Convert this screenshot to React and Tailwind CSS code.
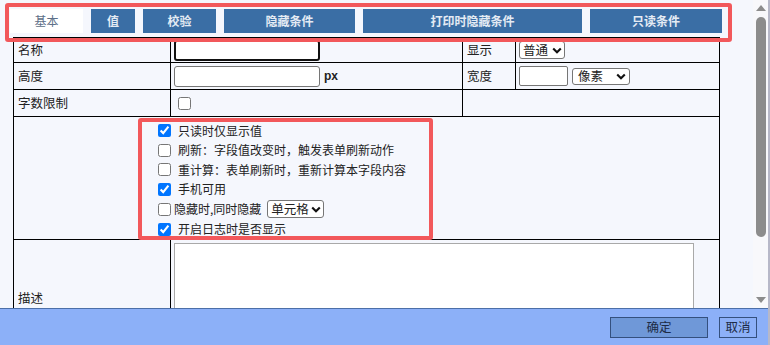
import { useState } from 'react';

const tabs = [
  { label: '基本', w: 'w-[73px]' },
  { label: '值', w: 'w-[44px]' },
  { label: '校验', w: 'w-[73px]' },
  { label: '隐藏条件', w: 'w-[131px]' },
  { label: '打印时隐藏条件', w: 'w-[219px]' },
  { label: '只读条件', w: 'w-[132px]' },
];

const options = [
  { label: '只读时仅显示值', checked: true },
  { label: '刷新：字段值改变时，触发表单刷新动作' },
  { label: '重计算：表单刷新时，重新计算本字段内容' },
  { label: '手机可用', checked: true },
];

function Check({ checked }) {
  return (
    <input
      type="checkbox"
      defaultChecked={checked}
      className="m-0 h-[13px] w-[13px] shrink-0"
    />
  );
}

// fake native select box: text + bold chevron
function Select({ value, className }) {
  return (
    <div
      className={
        'flex shrink-0 items-center justify-between rounded-[3px] border border-[#767676] bg-white pl-[3px] pr-[2px] text-[12.5px] leading-none text-[#222] ' +
        className
      }
    >
      <span>{value}</span>
      <svg width="10" height="7" viewBox="0 0 10 7">
        <path d="M1.2 1.4 L5 5.2 L8.8 1.4" fill="none" stroke="#111" strokeWidth="2.1" />
      </svg>
    </div>
  );
}

export default function App() {
  const [tab, setTab] = useState('基本');

  return (
    <div className="relative flex h-[345px] w-[770px] overflow-hidden bg-[#f5f7fd] font-['Noto_Sans_CJK_SC','Liberation_Sans',sans-serif] text-[12px] text-[#222] [text-spacing-trim:space-all]">
      <div className="flex w-[768px] flex-col">
        {/* scrollable body */}
        <div className="flex h-[308px]">
          <div className="flex-1 overflow-hidden pl-[10px] pt-[9px]">
            {/* tabs */}
            <div className="flex gap-2">
              {tabs.map((t) => (
                <button
                  key={t.label}
                  onClick={() => setTab(t.label)}
                  className={
                    'flex h-[24px] items-center justify-center text-[12px] ' +
                    t.w +
                    (tab === t.label
                      ? ' bg-white text-[#5d6f88]'
                      : ' bg-[#3a6ea5] font-bold text-[#e4ebf4]')
                  }
                >
                  {t.label}
                </button>
              ))}
            </div>

            {/* form table */}
            <table className="ml-[3px] mt-[4px] w-[706px] table-fixed border-collapse text-[12.5px]">
              <colgroup>
                <col className="w-[157px]" />
                <col className="w-[292px]" />
                <col className="w-[53px]" />
                <col className="w-[204px]" />
              </colgroup>
              <tbody>
                <tr className="h-[25px]">
                  <td className="border border-black pl-[4px]">名称</td>
                  <td className="border border-black pl-[3px]">
                    <input className="block h-[21px] w-[146px] rounded-[3px] border-2 border-[#111] bg-white outline-none" />
                  </td>
                  <td className="border border-black pl-[4px]">显示</td>
                  <td className="border border-black pl-[3px]">
                    <Select value="普通" className="h-[18px] w-[46px]" />
                  </td>
                </tr>
                <tr className="h-[27px]">
                  <td className="border border-black pl-[4px]">高度</td>
                  <td className="border border-black pl-[3px]">
                    <div className="flex items-center gap-[4px]">
                      <input className="h-[21px] w-[146px] rounded-[3px] border border-[#767676] bg-white outline-none" />
                      <span className="font-['Liberation_Sans',sans-serif] text-[12px] font-bold">px</span>
                    </div>
                  </td>
                  <td className="border border-black pl-[4px]">宽度</td>
                  <td className="border border-black pl-[3px]">
                    <div className="flex items-center gap-[4px]">
                      <input className="h-[20px] w-[49px] rounded-[2px] border border-[#767676] bg-white outline-none" />
                      <Select value="像素" className="h-[17px] w-[58px] pl-[5px] pr-[3px]" />
                    </div>
                  </td>
                </tr>
                <tr className="h-[27px]">
                  <td className="border border-black pl-[4px]">字数限制</td>
                  <td className="border border-black pl-[7px]">
                    <div className="flex">
                      <Check />
                    </div>
                  </td>
                  <td colSpan={2} className="border border-black" />
                </tr>
                <tr className="h-[123px]">
                  <td colSpan={4} className="border border-black pl-[144px] align-top text-[12px]">
                    <div className="flex flex-col pt-[4px]">
                      {options.map((o) => (
                        <label key={o.label} className="flex h-[19.5px] items-center gap-[7px]">
                          <Check checked={o.checked} />
                          <span>{o.label}</span>
                        </label>
                      ))}
                      <div className="flex h-[20px] items-center gap-[3px]">
                        <Check />
                        <span>隐藏时,同时隐藏</span>
                        <Select value="单元格" className="ml-[3px] h-[18px] w-[57px]" />
                      </div>
                      <label className="flex h-[20px] items-center gap-[7px]">
                        <Check checked />
                        <span>开启日志时是否显示</span>
                      </label>
                    </div>
                  </td>
                </tr>
                <tr className="h-[117px]">
                  <td className="border border-black pl-[4px]">描述</td>
                  <td colSpan={3} className="border border-black pl-[3px] pr-[25px] pt-[3px] align-top">
                    <textarea className="block h-[110px] w-full resize-none border border-[#a9a9a9] bg-white outline-none" />
                  </td>
                </tr>
              </tbody>
            </table>
          </div>

          {/* scrollbar */}
          <div className="flex w-[15px] flex-col items-center bg-[#f8f8fb] pt-[5px]">
            <div className="h-0 w-0 border-x-[5px] border-b-[6px] border-x-transparent border-b-[#8c8c8c]" />
            <div className="mt-[6px] h-[220px] w-[10px] rounded-full bg-[#8c8c8c]" />
            <div className="mt-auto mb-[5px] h-0 w-0 border-x-[5px] border-t-[6px] border-x-transparent border-t-[#8c8c8c]" />
          </div>
        </div>

        {/* footer */}
        <div className="flex flex-1 items-center justify-end gap-[11px] border-t border-[#4c6fa8] bg-[#8cb0f8] pr-[11px]">
          <button className="h-[21px] w-[98px] border border-[#34507e] bg-[#6f98d8] text-[12.5px] text-[#1d2b45]">确定</button>
          <button className="h-[21px] w-[38px] border border-[#34507e] bg-[#8cb0f8] text-[12.5px] text-[#1d2b45]">取消</button>
        </div>
      </div>
      <div className="w-[2px] bg-[#b7b8c8]" />

      {/* annotation boxes */}
      <div className="pointer-events-none absolute left-[5px] top-[3px] h-[39px] w-[727px] rounded-[3px] border-[4px] border-[#f2585b]" />
      <div className="pointer-events-none absolute left-[138px] top-[118px] h-[122px] w-[295px] rounded-[3px] border-[4px] border-[#f2585b]" />
    </div>
  );
}
